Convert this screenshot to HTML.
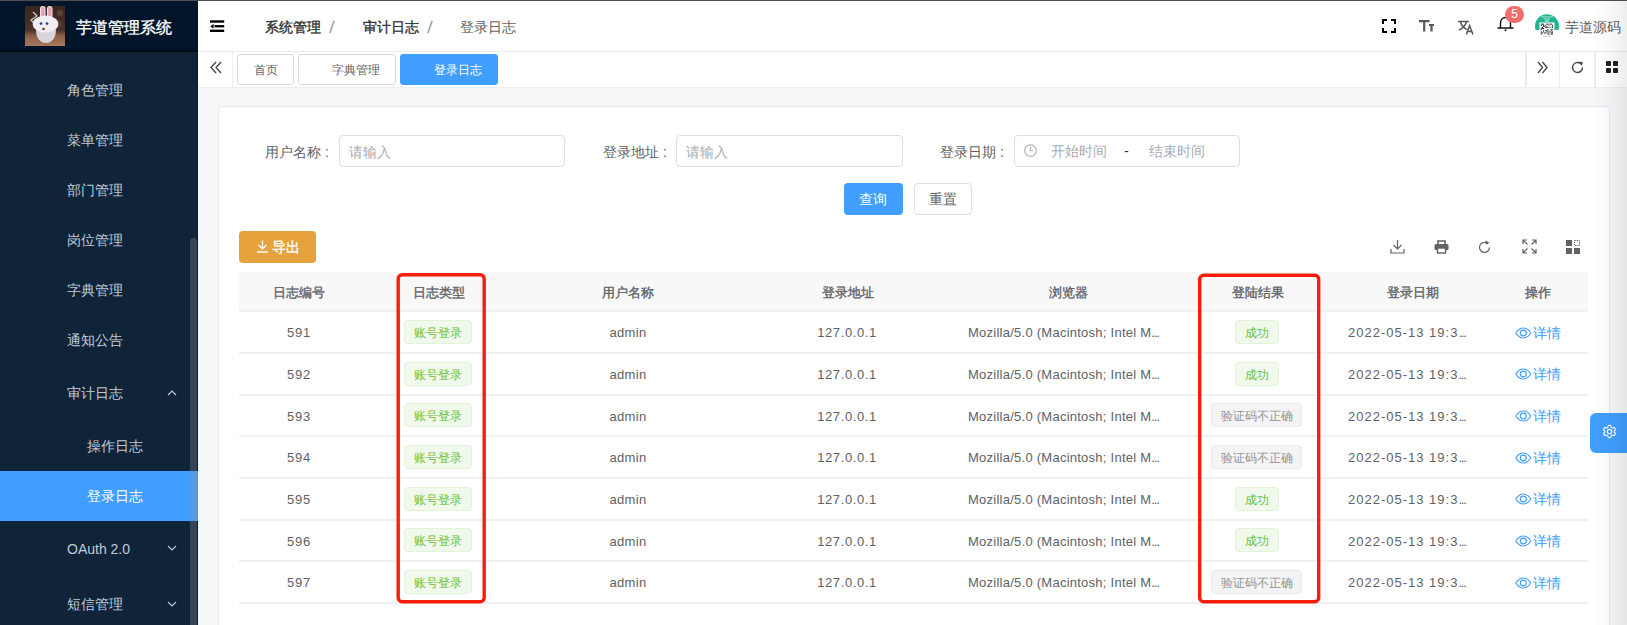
<!DOCTYPE html>
<html><head><meta charset="utf-8">
<style>
*{margin:0;padding:0;box-sizing:border-box}
html,body{width:1627px;height:625px;overflow:hidden;background:#f5f7f9;font-family:"Liberation Sans",sans-serif;font-size:14px;color:#606266;position:relative}
.abs{position:absolute}
.t{position:absolute;white-space:nowrap;line-height:1}
.c{text-align:center}
.mi{position:absolute;color:#bfcbd9;font-size:14px;line-height:1;white-space:nowrap}
.tag{position:absolute;top:54px;height:31px;border:1px solid #d9d9d9;border-radius:3px;background:#fff;font-size:12px;color:#606266;line-height:29px}
.lbl{position:absolute;font-size:14px;color:#606266;line-height:1;white-space:nowrap}
.inp{position:absolute;height:32px;border:1px solid #dcdfe6;border-radius:4px;background:#fff}
.ph{position:absolute;font-size:14px;color:#a8abb2;line-height:1;white-space:nowrap}
.th{position:absolute;font-size:13px;color:#606266;font-weight:normal;-webkit-text-stroke:0.35px #606266;line-height:1;white-space:nowrap;text-align:center}
.td{position:absolute;font-size:13px;color:#606266;line-height:1;white-space:nowrap}
.el{letter-spacing:-1.2px}
.med{font-weight:normal;-webkit-text-stroke:0.35px currentColor}
.rowline{position:absolute;left:239px;width:1349px;height:2px;background:#f0f1f4}
.tg{position:absolute;height:24px;border:1px solid #e1f3d8;background:#f0f9eb;color:#67c23a;border-radius:4px;font-size:12px;line-height:24px;text-align:center;white-space:nowrap}
.tgi{position:absolute;height:24px;border:1px solid #e9e9eb;background:#f4f4f5;color:#909399;border-radius:4px;font-size:12px;line-height:24px;text-align:center;white-space:nowrap}
.det{position:absolute;color:#409eff;font-size:14px;line-height:1;white-space:nowrap}
.redbox{position:absolute;border:3px solid #f01c1c;border-radius:5px}
</style></head><body>
<!-- sidebar -->
<div class="abs" style="left:0;top:0;width:198px;height:625px;background:#0f2438"></div>
<div class="abs" style="left:0;top:0;width:198px;height:51px;background:#001529"></div>
<div class="abs" style="left:196.7px;top:51px;width:1.3px;height:574px;background:#0a1a2c"></div>
<div class="abs" style="left:0;top:50.4px;width:198px;height:1.4px;background:#000b16"></div>
<svg class="abs" style="left:25px;top:6px" width="40" height="40" viewBox="0 0 40 40">
<defs><linearGradient id="bg1" x1="0" y1="0" x2="0" y2="1"><stop offset="0" stop-color="#3a2620"/><stop offset="0.6" stop-color="#4a3028"/><stop offset="0.75" stop-color="#8a5e48"/><stop offset="1" stop-color="#a87a5e"/></linearGradient></defs>
<rect width="40" height="40" fill="url(#bg1)"/>
<circle cx="35" cy="7" r="3" fill="#6a4a3a" opacity=".7"/><circle cx="34" cy="18" r="3.5" fill="#5e4032" opacity=".7"/>
<path d="M8 6L12 10L6 14L10 18" fill="none" stroke="#cfcfd4" stroke-width="1.2"/>
<rect x="15" y="0" width="5.5" height="13" rx="2.7" fill="#e8e4ea"/><rect x="16.3" y="1" width="3" height="10" rx="1.5" fill="#e79ab0"/>
<rect x="22" y="0" width="5.5" height="13" rx="2.7" fill="#e8e4ea"/><rect x="23.3" y="1" width="3" height="10" rx="1.5" fill="#e79ab0"/>
<ellipse cx="21" cy="25" rx="10" ry="12" fill="#d9d3dc"/>
<ellipse cx="20.5" cy="18" rx="12.8" ry="8.6" fill="#f1eef3"/>
<circle cx="16" cy="17.6" r="1.4" fill="#2a4a8a"/><circle cx="22" cy="17.6" r="1.4" fill="#2a4a8a"/>
<ellipse cx="18.5" cy="23" rx="1.5" ry="1.2" fill="#7a4a40"/>
</svg>
<div class="t med" style="left:76px;top:19.8px;font-size:15.8px;color:#fff">芋道管理系统</div>
<div class="mi" style="left:67px;top:83px">角色管理</div>
<div class="mi" style="left:67px;top:133px">菜单管理</div>
<div class="mi" style="left:67px;top:183px">部门管理</div>
<div class="mi" style="left:67px;top:233px">岗位管理</div>
<div class="mi" style="left:67px;top:283px">字典管理</div>
<div class="mi" style="left:67px;top:333px">通知公告</div>
<div class="mi" style="left:67px;top:386px">审计日志</div>
<svg class="abs" style="left:167px;top:389px" width="10" height="7" viewBox="0 0 10 7"><path d="M1 6L5 2L9 6" fill="none" stroke="#bfcbd9" stroke-width="1.2"/></svg>
<div class="mi" style="left:87px;top:439px">操作日志</div>
<div class="abs" style="left:0;top:471px;width:198px;height:50px;background:#409eff"></div>
<div class="mi" style="left:87px;top:489px;color:#fff">登录日志</div>
<div class="mi" style="left:67px;top:542px">OAuth 2.0</div>
<svg class="abs" style="left:167px;top:545px" width="10" height="7" viewBox="0 0 10 7"><path d="M1 1L5 5L9 1" fill="none" stroke="#bfcbd9" stroke-width="1.2"/></svg>
<div class="mi" style="left:67px;top:597px">短信管理</div>
<svg class="abs" style="left:167px;top:601px" width="10" height="7" viewBox="0 0 10 7"><path d="M1 1L5 5L9 1" fill="none" stroke="#bfcbd9" stroke-width="1.2"/></svg>
<div class="abs" style="left:190px;top:238px;width:6.5px;height:400px;background:rgba(144,147,153,0.3);border-radius:3px"></div>

<!-- header -->
<div class="abs" style="left:198px;top:0;width:1429px;height:52px;background:#fff;border-bottom:1.5px solid #ececec"></div>
<svg class="abs" style="left:210px;top:20px" width="15" height="13" viewBox="0 0 15 13"><rect x="0" y="0.3" width="14.2" height="2.4" fill="#000"/><rect x="4.5" y="5.1" width="9.7" height="2.3" fill="#000"/><rect x="0" y="9.6" width="14.2" height="2.4" fill="#000"/><path d="M0.2 6.25L3.6 3.9V8.6Z" fill="#000"/></svg>
<div class="t med" style="left:265px;top:20px;color:#303133">系统管理</div>
<svg class="abs" style="left:328px;top:20px" width="8" height="14"><path d="M5.9 1.3L2.1 12.5" stroke="#a3a6ad" stroke-width="1.7" stroke-linecap="round"/></svg>
<div class="t med" style="left:363px;top:20px;color:#303133">审计日志</div>
<svg class="abs" style="left:426px;top:20px" width="8" height="14"><path d="M5.9 1.3L2.1 12.5" stroke="#a3a6ad" stroke-width="1.7" stroke-linecap="round"/></svg>
<div class="t" style="left:460px;top:20px;color:#606266">登录日志</div>

<!-- header right -->
<svg class="abs" style="left:1382px;top:19px" width="14" height="14" viewBox="0 0 14 14"><path d="M1 5V1H5M9 1H13V5M13 9V13H9M5 13H1V9" fill="none" stroke="#000" stroke-width="2"/></svg>
<svg class="abs" style="left:1419px;top:20px" width="15" height="12" viewBox="0 0 15 12"><path d="M0 1.2H10.5M5.2 1.2V11.5M10 5H15M12.5 5V11.5" fill="none" stroke="#58585c" stroke-width="2.2"/></svg>
<svg class="abs" style="left:1458px;top:20px" width="16" height="15" viewBox="0 0 16 15"><path d="M0 1.6H11M2.3 1.8C3.5 5.5 5.5 8 9 9.6M8.6 1.8C7.3 5.5 4.5 8.5 1 10.2M8.3 14.4L11.6 5.6L14.9 14.4M9.4 11.4H13.8" fill="none" stroke="#555" stroke-width="1.5"/></svg>
<svg class="abs" style="left:1497px;top:15px" width="17" height="17" viewBox="0 0 17 17"><path d="M3.5 13V8C3.5 5 5.5 2.5 8.5 2.5S13.5 5 13.5 8V13M0.5 13H16.5" fill="none" stroke="#111" stroke-width="1.4"/><circle cx="8.5" cy="15.3" r="1" fill="#111"/></svg>
<div class="abs" style="left:1505px;top:6px;width:19px;height:16.5px;background:#f56c6c;border-radius:9px;color:#fff;font-size:12px;line-height:16.5px;text-align:center">5</div>
<svg class="abs" style="left:1534.5px;top:14px" width="24" height="25" viewBox="0 0 24 25">
<clipPath id="avc"><circle cx="12" cy="12.2" r="12"/></clipPath>
<g clip-path="url(#avc)"><rect width="24" height="25" fill="#fff"/><rect width="24" height="16" fill="#1fb58f"/>
<rect x="4.5" y="8.5" width="15" height="13" fill="#fff"/>
<rect x="6" y="2.5" width="12" height="0.8" fill="#bfeee0"/><rect x="9" y="4.5" width="6" height="0.8" fill="#bfeee0"/><rect x="10" y="6.5" width="4" height="1" fill="#e8fff6"/>
<rect x="5.80" y="9.60" width="1.1" height="1.1" fill="#333"/><rect x="6.90" y="9.60" width="1.1" height="1.1" fill="#333"/><rect x="8.00" y="9.60" width="1.1" height="1.1" fill="#333"/><rect x="11.30" y="9.60" width="1.1" height="1.1" fill="#333"/><rect x="12.40" y="9.60" width="1.1" height="1.1" fill="#333"/><rect x="14.60" y="9.60" width="1.1" height="1.1" fill="#333"/><rect x="15.70" y="9.60" width="1.1" height="1.1" fill="#333"/><rect x="5.80" y="10.70" width="1.1" height="1.1" fill="#333"/><rect x="8.00" y="10.70" width="1.1" height="1.1" fill="#333"/><rect x="10.20" y="10.70" width="1.1" height="1.1" fill="#333"/><rect x="13.50" y="10.70" width="1.1" height="1.1" fill="#333"/><rect x="16.80" y="10.70" width="1.1" height="1.1" fill="#333"/><rect x="8.00" y="11.80" width="1.1" height="1.1" fill="#333"/><rect x="9.10" y="11.80" width="1.1" height="1.1" fill="#333"/><rect x="11.30" y="11.80" width="1.1" height="1.1" fill="#333"/><rect x="16.80" y="11.80" width="1.1" height="1.1" fill="#333"/><rect x="6.90" y="12.90" width="1.1" height="1.1" fill="#333"/><rect x="10.20" y="12.90" width="1.1" height="1.1" fill="#333"/><rect x="11.30" y="12.90" width="1.1" height="1.1" fill="#333"/><rect x="12.40" y="12.90" width="1.1" height="1.1" fill="#333"/><rect x="14.60" y="12.90" width="1.1" height="1.1" fill="#333"/><rect x="16.80" y="12.90" width="1.1" height="1.1" fill="#333"/><rect x="5.80" y="14.00" width="1.1" height="1.1" fill="#333"/><rect x="6.90" y="14.00" width="1.1" height="1.1" fill="#333"/><rect x="8.00" y="14.00" width="1.1" height="1.1" fill="#333"/><rect x="5.80" y="15.10" width="1.1" height="1.1" fill="#333"/><rect x="12.40" y="15.10" width="1.1" height="1.1" fill="#333"/><rect x="15.70" y="15.10" width="1.1" height="1.1" fill="#333"/><rect x="16.80" y="15.10" width="1.1" height="1.1" fill="#333"/><rect x="8.00" y="16.20" width="1.1" height="1.1" fill="#333"/><rect x="10.20" y="16.20" width="1.1" height="1.1" fill="#333"/><rect x="11.30" y="16.20" width="1.1" height="1.1" fill="#333"/><rect x="12.40" y="16.20" width="1.1" height="1.1" fill="#333"/><rect x="15.70" y="16.20" width="1.1" height="1.1" fill="#333"/><rect x="5.80" y="17.30" width="1.1" height="1.1" fill="#333"/><rect x="8.00" y="17.30" width="1.1" height="1.1" fill="#333"/><rect x="11.30" y="17.30" width="1.1" height="1.1" fill="#333"/><rect x="13.50" y="17.30" width="1.1" height="1.1" fill="#333"/><rect x="14.60" y="17.30" width="1.1" height="1.1" fill="#333"/><rect x="16.80" y="17.30" width="1.1" height="1.1" fill="#333"/><rect x="5.80" y="18.40" width="1.1" height="1.1" fill="#333"/><rect x="6.90" y="18.40" width="1.1" height="1.1" fill="#333"/><rect x="9.10" y="18.40" width="1.1" height="1.1" fill="#333"/><rect x="10.20" y="18.40" width="1.1" height="1.1" fill="#333"/><rect x="12.40" y="18.40" width="1.1" height="1.1" fill="#333"/><rect x="15.70" y="18.40" width="1.1" height="1.1" fill="#333"/><rect x="16.80" y="18.40" width="1.1" height="1.1" fill="#333"/><rect x="5.80" y="19.50" width="1.1" height="1.1" fill="#333"/><rect x="12.40" y="19.50" width="1.1" height="1.1" fill="#333"/><rect x="13.50" y="19.50" width="1.1" height="1.1" fill="#333"/><rect x="15.70" y="19.50" width="1.1" height="1.1" fill="#333"/><rect x="16.80" y="19.50" width="1.1" height="1.1" fill="#333"/>
<rect x="8" y="21.8" width="8" height="0.7" fill="#bbb"/></g>
</svg>
<div class="t" style="left:1565px;top:19.5px;color:#5a5a5a">芋道源码</div>

<!-- tags view -->
<div class="abs" style="left:198px;top:52px;width:1429px;height:36px;background:#fff;border-bottom:1px solid #eeeeee"></div>
<svg class="abs" style="left:210px;top:61px" width="12" height="13" viewBox="0 0 12 13"><path d="M6 1L1 6.5L6 12M11 1L6 6.5L11 12" fill="none" stroke="#444" stroke-width="1.3"/></svg>
<div class="abs" style="left:232px;top:52px;width:1px;height:35px;background:#eee"></div>
<div class="tag" style="left:237px;width:57px;"><span class="t" style="left:16px;top:9px;font-size:12px">首页</span></div>
<div class="tag" style="left:298px;width:98px;"><span class="t" style="left:33px;top:9px;font-size:12px">字典管理</span></div>
<div class="tag" style="left:400px;width:98px;background:#409eff;border-color:#409eff;color:#fff"><span class="t" style="left:33px;top:9px;font-size:12px">登录日志</span></div>
<div class="abs" style="left:1525px;top:52px;width:1.5px;height:35px;background:#ececec"></div>
<div class="abs" style="left:1558.5px;top:52px;width:1.5px;height:35px;background:#ececec"></div>
<div class="abs" style="left:1594px;top:52px;width:1.5px;height:35px;background:#ececec"></div>
<svg class="abs" style="left:1537px;top:61px" width="11" height="13" viewBox="0 0 11 13"><path d="M1 1L5.5 6.5L1 12M5.5 1L10 6.5L5.5 12" fill="none" stroke="#444" stroke-width="1.3"/></svg>
<svg class="abs" style="left:1571px;top:61px" width="13" height="13" viewBox="0 0 13 13"><path d="M11.5 6.5A5 5 0 1 1 9.5 2.5" fill="none" stroke="#444" stroke-width="1.4"/><path d="M8 0.5L12 1.5L10.5 5Z" fill="#444"/></svg>
<svg class="abs" style="left:1606px;top:61px" width="12" height="12" viewBox="0 0 12 12"><rect x="0" y="0" width="5" height="5" rx="0.8" fill="#222"/><rect x="7" y="0" width="5" height="5" rx="0.8" fill="#222"/><rect x="0" y="7" width="5" height="5" rx="0.8" fill="#222"/><rect x="7" y="7" width="5" height="5" rx="0.8" fill="#222"/></svg>

<!-- content -->
<div class="abs" style="left:218px;top:106px;width:1392px;height:560px;background:#fff;border:1px solid #e4e7ed;border-radius:4px"></div>

<!-- form -->
<div class="lbl" style="left:265px;top:145px">用户名称 :</div>
<div class="inp" style="left:339px;top:135px;width:226px"></div>
<div class="ph" style="left:349px;top:145px">请输入</div>
<div class="lbl" style="left:603px;top:145px">登录地址 :</div>
<div class="inp" style="left:676px;top:135px;width:227px"></div>
<div class="ph" style="left:686px;top:145px">请输入</div>
<div class="lbl" style="left:940px;top:145px">登录日期 :</div>
<div class="inp" style="left:1014px;top:135px;width:226px"></div>
<svg class="abs" style="left:1024px;top:144px" width="13" height="13" viewBox="0 0 13 13"><circle cx="6.5" cy="6.5" r="5.8" fill="none" stroke="#a8abb2" stroke-width="1.1"/><path d="M6.5 3V6.8H9" fill="none" stroke="#a8abb2" stroke-width="1.1"/></svg>
<div class="ph" style="left:1051px;top:144px">开始时间</div>
<div class="t" style="left:1124px;top:144px;color:#303133">-</div>
<div class="ph" style="left:1149px;top:144px">结束时间</div>
<div class="abs" style="left:844px;top:183px;width:59px;height:32px;background:#409eff;border-radius:4px"></div>
<div class="t" style="left:859px;top:192px;color:#fff">查询</div>
<div class="abs" style="left:914px;top:183px;width:58px;height:32px;background:#fff;border:1px solid #dcdfe6;border-radius:4px"></div>
<div class="t" style="left:929px;top:192px;color:#606266">重置</div>

<!-- toolbar -->
<div class="abs" style="left:239px;top:231px;width:77px;height:32px;background:#e6a23c;border-radius:4px"></div>
<svg class="abs" style="left:257px;top:240px" width="11" height="13" viewBox="0 0 11 13"><path d="M5.5 0.5V9M1.5 5L5.5 9L9.5 5M0 12H11" fill="none" stroke="#fff" stroke-width="1.3"/></svg>
<div class="t med" style="left:272px;top:240px;color:#fff">导出</div>
<svg class="abs" style="left:1390px;top:239px" width="15" height="15" viewBox="0 0 15 15"><path d="M7.5 1V10M3.5 6L7.5 10L11.5 6M1 10V14H14V10" fill="none" stroke="#606266" stroke-width="1.2"/></svg>
<svg class="abs" style="left:1434px;top:240px" width="15" height="14" viewBox="0 0 15 14"><path d="M4 4V1H11V4" fill="none" stroke="#606266" stroke-width="1.6"/><rect x="0.5" y="4" width="14" height="6" rx="1.5" fill="#606266"/><rect x="3.5" y="8" width="8" height="5" fill="#fff" stroke="#606266" stroke-width="1.4"/></svg>
<svg class="abs" style="left:1478px;top:240px" width="13" height="14" viewBox="0 0 13 14"><path d="M11.5 7.5A5 5 0 1 1 8.5 2.8" fill="none" stroke="#606266" stroke-width="1.2"/><path d="M7.5 0.5L11.5 2.5L8 5Z" fill="#606266"/></svg>
<svg class="abs" style="left:1522px;top:239px" width="15" height="15" viewBox="0 0 15 15"><path d="M1 5V1H5M1 1L5.5 5.5M10 1H14V5M14 1L9.5 5.5M14 10V14H10M14 14L9.5 9.5M5 14H1V10M1 14L5.5 9.5" fill="none" stroke="#606266" stroke-width="1.2"/></svg>
<svg class="abs" style="left:1566px;top:240px" width="14" height="14" viewBox="0 0 14 14"><rect x="0" y="0" width="6" height="6" fill="#606266"/><rect x="8.5" y="0.5" width="5" height="5" fill="none" stroke="#606266" stroke-width="1" stroke-dasharray="1.2 1"/><rect x="0" y="8" width="6" height="6" fill="#606266"/><rect x="8" y="8" width="6" height="6" fill="#606266"/></svg>

<!-- table -->
<div class="abs" style="left:239px;top:272px;width:1349px;height:40px;background:#f8f8f9"></div>
<div class="rowline" style="top:310.3px"></div>
<div class="th" style="left:249px;width:100px;top:286.2px">日志编号</div>
<div class="th" style="left:389px;width:100px;top:286.2px">日志类型</div>
<div class="th" style="left:578px;width:100px;top:286.2px">用户名称</div>
<div class="th" style="left:798px;width:100px;top:286.2px">登录地址</div>
<div class="th" style="left:1018px;width:100px;top:286.2px">浏览器</div>
<div class="th" style="left:1208px;width:100px;top:286.2px">登陆结果</div>
<div class="th" style="left:1363px;width:100px;top:286.2px">登录日期</div>
<div class="th" style="left:1488px;width:100px;top:286.2px">操作</div>
<div class="td c" style="left:259px;width:80px;top:326.2px;letter-spacing:0.8px">591</div>
<div class="tg" style="left:404px;top:320.0px;width:68px">账号登录</div>
<div class="td c" style="left:578px;width:100px;top:326.2px;letter-spacing:0.3px">admin</div>
<div class="td c" style="left:797px;width:100px;top:326.2px;letter-spacing:0.6px">127.0.0.1</div>
<div class="td" style="left:968px;top:326.2px;letter-spacing:0.25px">Mozilla/5.0 (Macintosh; Intel M<span class="el">...</span></div>
<div class="tg" style="left:1235px;top:320.0px;width:44px">成功</div>
<div class="td" style="left:1348px;top:326.2px;letter-spacing:1.0px">2022-05-13 19:3<span class="el">...</span></div>
<div class="det" style="left:1514.5px;top:325.5px"><svg width="17" height="12" viewBox="0 0 17 12" style="vertical-align:-1px;margin-right:1px"><path d="M0.8 6C3 2.6 5.5 1 8.3 1S13.6 2.6 15.8 6C13.6 9.4 11 11 8.3 11S3 9.4 0.8 6Z" fill="none" stroke="#409eff" stroke-width="1.15"/><circle cx="8.3" cy="6" r="2.9" fill="none" stroke="#409eff" stroke-width="1.15"/></svg>详情</div>
<div class="rowline" style="top:351.8px"></div>
<div class="td c" style="left:259px;width:80px;top:367.9px;letter-spacing:0.8px">592</div>
<div class="tg" style="left:404px;top:361.7px;width:68px">账号登录</div>
<div class="td c" style="left:578px;width:100px;top:367.9px;letter-spacing:0.3px">admin</div>
<div class="td c" style="left:797px;width:100px;top:367.9px;letter-spacing:0.6px">127.0.0.1</div>
<div class="td" style="left:968px;top:367.9px;letter-spacing:0.25px">Mozilla/5.0 (Macintosh; Intel M<span class="el">...</span></div>
<div class="tg" style="left:1235px;top:361.7px;width:44px">成功</div>
<div class="td" style="left:1348px;top:367.9px;letter-spacing:1.0px">2022-05-13 19:3<span class="el">...</span></div>
<div class="det" style="left:1514.5px;top:367.2px"><svg width="17" height="12" viewBox="0 0 17 12" style="vertical-align:-1px;margin-right:1px"><path d="M0.8 6C3 2.6 5.5 1 8.3 1S13.6 2.6 15.8 6C13.6 9.4 11 11 8.3 11S3 9.4 0.8 6Z" fill="none" stroke="#409eff" stroke-width="1.15"/><circle cx="8.3" cy="6" r="2.9" fill="none" stroke="#409eff" stroke-width="1.15"/></svg>详情</div>
<div class="rowline" style="top:393.5px"></div>
<div class="td c" style="left:259px;width:80px;top:409.6px;letter-spacing:0.8px">593</div>
<div class="tg" style="left:404px;top:403.4px;width:68px">账号登录</div>
<div class="td c" style="left:578px;width:100px;top:409.6px;letter-spacing:0.3px">admin</div>
<div class="td c" style="left:797px;width:100px;top:409.6px;letter-spacing:0.6px">127.0.0.1</div>
<div class="td" style="left:968px;top:409.6px;letter-spacing:0.25px">Mozilla/5.0 (Macintosh; Intel M<span class="el">...</span></div>
<div class="tgi" style="left:1211px;top:403.4px;width:91px">验证码不正确</div>
<div class="td" style="left:1348px;top:409.6px;letter-spacing:1.0px">2022-05-13 19:3<span class="el">...</span></div>
<div class="det" style="left:1514.5px;top:408.9px"><svg width="17" height="12" viewBox="0 0 17 12" style="vertical-align:-1px;margin-right:1px"><path d="M0.8 6C3 2.6 5.5 1 8.3 1S13.6 2.6 15.8 6C13.6 9.4 11 11 8.3 11S3 9.4 0.8 6Z" fill="none" stroke="#409eff" stroke-width="1.15"/><circle cx="8.3" cy="6" r="2.9" fill="none" stroke="#409eff" stroke-width="1.15"/></svg>详情</div>
<div class="rowline" style="top:435.1px"></div>
<div class="td c" style="left:259px;width:80px;top:451.2px;letter-spacing:0.8px">594</div>
<div class="tg" style="left:404px;top:445.0px;width:68px">账号登录</div>
<div class="td c" style="left:578px;width:100px;top:451.2px;letter-spacing:0.3px">admin</div>
<div class="td c" style="left:797px;width:100px;top:451.2px;letter-spacing:0.6px">127.0.0.1</div>
<div class="td" style="left:968px;top:451.2px;letter-spacing:0.25px">Mozilla/5.0 (Macintosh; Intel M<span class="el">...</span></div>
<div class="tgi" style="left:1211px;top:445.0px;width:91px">验证码不正确</div>
<div class="td" style="left:1348px;top:451.2px;letter-spacing:1.0px">2022-05-13 19:3<span class="el">...</span></div>
<div class="det" style="left:1514.5px;top:450.5px"><svg width="17" height="12" viewBox="0 0 17 12" style="vertical-align:-1px;margin-right:1px"><path d="M0.8 6C3 2.6 5.5 1 8.3 1S13.6 2.6 15.8 6C13.6 9.4 11 11 8.3 11S3 9.4 0.8 6Z" fill="none" stroke="#409eff" stroke-width="1.15"/><circle cx="8.3" cy="6" r="2.9" fill="none" stroke="#409eff" stroke-width="1.15"/></svg>详情</div>
<div class="rowline" style="top:476.8px"></div>
<div class="td c" style="left:259px;width:80px;top:492.9px;letter-spacing:0.8px">595</div>
<div class="tg" style="left:404px;top:486.7px;width:68px">账号登录</div>
<div class="td c" style="left:578px;width:100px;top:492.9px;letter-spacing:0.3px">admin</div>
<div class="td c" style="left:797px;width:100px;top:492.9px;letter-spacing:0.6px">127.0.0.1</div>
<div class="td" style="left:968px;top:492.9px;letter-spacing:0.25px">Mozilla/5.0 (Macintosh; Intel M<span class="el">...</span></div>
<div class="tg" style="left:1235px;top:486.7px;width:44px">成功</div>
<div class="td" style="left:1348px;top:492.9px;letter-spacing:1.0px">2022-05-13 19:3<span class="el">...</span></div>
<div class="det" style="left:1514.5px;top:492.2px"><svg width="17" height="12" viewBox="0 0 17 12" style="vertical-align:-1px;margin-right:1px"><path d="M0.8 6C3 2.6 5.5 1 8.3 1S13.6 2.6 15.8 6C13.6 9.4 11 11 8.3 11S3 9.4 0.8 6Z" fill="none" stroke="#409eff" stroke-width="1.15"/><circle cx="8.3" cy="6" r="2.9" fill="none" stroke="#409eff" stroke-width="1.15"/></svg>详情</div>
<div class="rowline" style="top:518.5px"></div>
<div class="td c" style="left:259px;width:80px;top:534.6px;letter-spacing:0.8px">596</div>
<div class="tg" style="left:404px;top:528.4px;width:68px">账号登录</div>
<div class="td c" style="left:578px;width:100px;top:534.6px;letter-spacing:0.3px">admin</div>
<div class="td c" style="left:797px;width:100px;top:534.6px;letter-spacing:0.6px">127.0.0.1</div>
<div class="td" style="left:968px;top:534.6px;letter-spacing:0.25px">Mozilla/5.0 (Macintosh; Intel M<span class="el">...</span></div>
<div class="tg" style="left:1235px;top:528.4px;width:44px">成功</div>
<div class="td" style="left:1348px;top:534.6px;letter-spacing:1.0px">2022-05-13 19:3<span class="el">...</span></div>
<div class="det" style="left:1514.5px;top:533.9px"><svg width="17" height="12" viewBox="0 0 17 12" style="vertical-align:-1px;margin-right:1px"><path d="M0.8 6C3 2.6 5.5 1 8.3 1S13.6 2.6 15.8 6C13.6 9.4 11 11 8.3 11S3 9.4 0.8 6Z" fill="none" stroke="#409eff" stroke-width="1.15"/><circle cx="8.3" cy="6" r="2.9" fill="none" stroke="#409eff" stroke-width="1.15"/></svg>详情</div>
<div class="rowline" style="top:560.2px"></div>
<div class="td c" style="left:259px;width:80px;top:576.3px;letter-spacing:0.8px">597</div>
<div class="tg" style="left:404px;top:570.1px;width:68px">账号登录</div>
<div class="td c" style="left:578px;width:100px;top:576.3px;letter-spacing:0.3px">admin</div>
<div class="td c" style="left:797px;width:100px;top:576.3px;letter-spacing:0.6px">127.0.0.1</div>
<div class="td" style="left:968px;top:576.3px;letter-spacing:0.25px">Mozilla/5.0 (Macintosh; Intel M<span class="el">...</span></div>
<div class="tgi" style="left:1211px;top:570.1px;width:91px">验证码不正确</div>
<div class="td" style="left:1348px;top:576.3px;letter-spacing:1.0px">2022-05-13 19:3<span class="el">...</span></div>
<div class="det" style="left:1514.5px;top:575.6px"><svg width="17" height="12" viewBox="0 0 17 12" style="vertical-align:-1px;margin-right:1px"><path d="M0.8 6C3 2.6 5.5 1 8.3 1S13.6 2.6 15.8 6C13.6 9.4 11 11 8.3 11S3 9.4 0.8 6Z" fill="none" stroke="#409eff" stroke-width="1.15"/><circle cx="8.3" cy="6" r="2.9" fill="none" stroke="#409eff" stroke-width="1.15"/></svg>详情</div>
<div class="rowline" style="top:601.9px"></div><svg class="abs" style="left:0;top:0" width="1627" height="625"><rect x="398.2" y="274.7" width="86" height="327" rx="4" fill="none" stroke="#fa1e0a" stroke-width="3.4"/><rect x="1199.7" y="275.2" width="119" height="326.5" rx="4" fill="none" stroke="#fa1e0a" stroke-width="3.4"/></svg>
<!-- settings float -->
<div class="abs" style="left:1590px;top:413px;width:37px;height:40px;background:#409eff;border-radius:6px 0 0 6px"></div>
<svg class="abs" style="left:1602px;top:424px" width="15" height="15" viewBox="0 0 24 24"><path d="M12 2L14 2.5L14.6 5.2L16.8 6.4L19.4 5.5L20.8 7L21.5 9.2L19.6 11V13L21.5 14.8L20.8 17L19.4 18.5L16.8 17.6L14.6 18.8L14 21.5L12 22L10 21.5L9.4 18.8L7.2 17.6L4.6 18.5L3.2 17L2.5 14.8L4.4 13V11L2.5 9.2L3.2 7L4.6 5.5L7.2 6.4L9.4 5.2L10 2.5Z" fill="none" stroke="#fff" stroke-width="1.8" stroke-linejoin="round"/><circle cx="12" cy="12" r="3.5" fill="none" stroke="#fff" stroke-width="1.8"/></svg>
<!-- top line & edge shade -->
<div class="abs" style="left:0;top:0;width:1627px;height:1px;background:#4e4e50"></div>
<div class="abs" style="left:1592px;top:1px;width:35px;height:624px;background:linear-gradient(90deg,rgba(0,0,0,0),rgba(0,0,0,0.02) 40%,rgba(0,0,0,0.07))"></div>
</body></html>
